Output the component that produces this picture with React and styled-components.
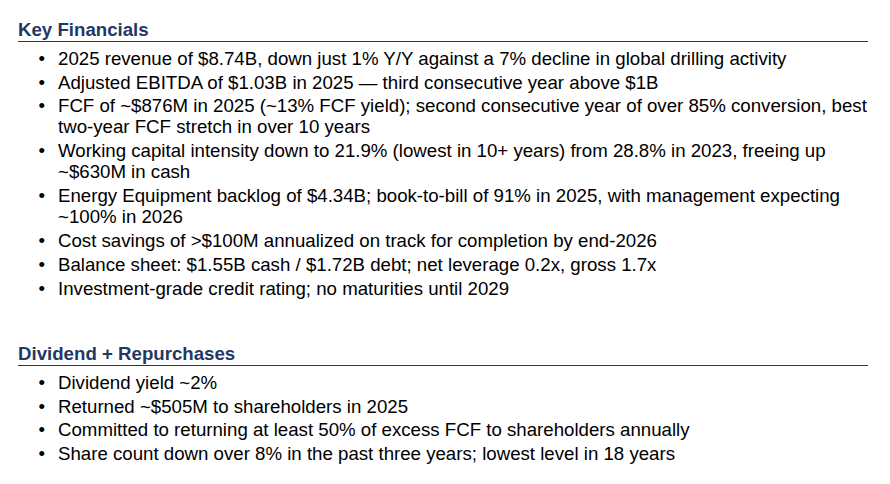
import React from "react";
import styled, { createGlobalStyle } from "styled-components";

const GlobalStyle = createGlobalStyle`
  html, body {
    margin: 0;
    padding: 0;
    background: #ffffff;
  }
  body {
    font-family: "Liberation Sans", Arial, sans-serif;
    color: #000000;
  }
`;

const Page = styled.main`
  width: 890px;
  height: 484px;
  box-sizing: border-box;
  padding: 18.7px 22px 0 18px;
  display: flex;
  flex-direction: column;
  gap: 44px;
`;

const Section = styled.section`
  display: flex;
  flex-direction: column;
`;

const Heading = styled.h2`
  margin: 0;
  font-size: 18.67px;
  line-height: 21px;
  font-weight: 700;
  color: #1f3864;
  padding-bottom: 0.9px;
  border-bottom: 1.5px solid #1f3864;
`;

const List = styled.ul`
  list-style: none;
  margin: 3.35px 0 0 0;
  padding: 0;
`;

const Item = styled.li`
  display: grid;
  grid-template-columns: 40px 1fr;
  margin-top: 2.85px;
  font-size: 18.67px;
  line-height: 21px;
  color: #000000;

  &::before {
    content: "•";
    padding-left: 20.5px;
  }
`;

const sections = [
  {
    title: "Key Financials",
    items: [
      "2025 revenue of $8.74B, down just 1% Y/Y against a 7% decline in global drilling activity",
      "Adjusted EBITDA of $1.03B in 2025 — third consecutive year above $1B",
      "FCF of ~$876M in 2025 (~13% FCF yield); second consecutive year of over 85% conversion, best two-year FCF stretch in over 10 years",
      "Working capital intensity down to 21.9% (lowest in 10+ years) from 28.8% in 2023, freeing up ~$630M in cash",
      "Energy Equipment backlog of $4.34B; book-to-bill of 91% in 2025, with management expecting ~100% in 2026",
      "Cost savings of >$100M annualized on track for completion by end-2026",
      "Balance sheet: $1.55B cash / $1.72B debt; net leverage 0.2x, gross 1.7x",
      "Investment-grade credit rating; no maturities until 2029",
    ],
  },
  {
    title: "Dividend + Repurchases",
    items: [
      "Dividend yield ~2%",
      "Returned ~$505M to shareholders in 2025",
      "Committed to returning at least 50% of excess FCF to shareholders annually",
      "Share count down over 8% in the past three years; lowest level in 18 years",
    ],
  },
];

export default function App() {
  return (
    <>
      <GlobalStyle />
      <Page>
        {sections.map((s) => (
          <Section key={s.title}>
            <Heading>{s.title}</Heading>
            <List>
              {s.items.map((t) => (
                <Item key={t}>
                  <span>{t}</span>
                </Item>
              ))}
            </List>
          </Section>
        ))}
      </Page>
    </>
  );
}
